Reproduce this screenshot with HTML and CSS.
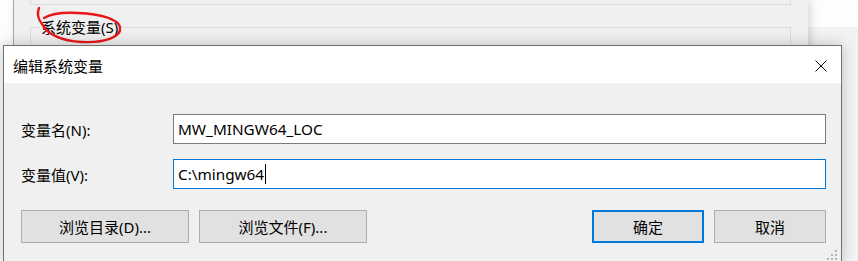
FILE: index.html
```html
<!DOCTYPE html>
<html lang="zh-CN">
<head>
    <meta charset="UTF-8">
    <meta name="viewport" content="width=device-width, initial-scale=1.0">
    <title>编辑系统变量</title>
    <link rel="stylesheet" href="styles.css">
</head>
<body>
    <div class="desktop">
        <div class="behind-right"></div>

        <!-- 后面的“环境变量”窗口 -->
        <div class="bg-window">
            <div class="group group-user"></div>
            <fieldset class="group group-system">
                <legend>系统变量(S)</legend>
            </fieldset>
        </div>

        <!-- 红色圈注 -->
        <svg class="ink" width="130" height="50" viewBox="0 0 130 50">
            <path d="M39 8 C37 13 38 19 42 24 C47 34 61 41 82 42 C105 43 122 37 120 27 C118 19 101 14 78 13 C62 12 51 14 44 18"
                  fill="none" stroke="#e8171a" stroke-width="2.4" stroke-linecap="round"/>
        </svg>

        <div class="dialog">
            <div class="titlebar">
                <span class="title">编辑系统变量</span>
                <span class="close">
                    <svg width="12" height="12" viewBox="0 0 12 12">
                        <path d="M0.5 0.5 L11.5 11.5 M11.5 0.5 L0.5 11.5" stroke="#111" stroke-width="1"/>
                    </svg>
                </span>
            </div>

            <div class="dialog-body">
                <div class="row">
                    <label class="label">变量名(N):</label>
                    <div class="field">MW_MINGW64_LOC</div>
                </div>
                <div class="row">
                    <label class="label">变量值(V):</label>
                    <div class="field focused">C:\mingw64<span class="caret"></span></div>
                </div>
                <div class="buttons">
                    <div class="btn-group">
                        <button class="btn wide">浏览目录(D)...</button>
                        <button class="btn wide">浏览文件(F)...</button>
                    </div>
                    <div class="btn-group">
                        <button class="btn default">确定</button>
                        <button class="btn">取消</button>
                    </div>
                </div>
            </div>

            <svg class="grip" width="11" height="11" viewBox="0 0 11 11">
                <rect x="9" y="1" width="2" height="2" fill="#b4b4b4"/>
                <rect x="5" y="5" width="2" height="2" fill="#b4b4b4"/>
                <rect x="9" y="5" width="2" height="2" fill="#b4b4b4"/>
                <rect x="1" y="9" width="2" height="2" fill="#b4b4b4"/>
                <rect x="5" y="9" width="2" height="2" fill="#b4b4b4"/>
                <rect x="9" y="9" width="2" height="2" fill="#b4b4b4"/>
            </svg>
        </div>
    </div>
</body>
</html>
```

FILE: styles.css
```css
* {
    margin: 0;
    padding: 0;
    box-sizing: border-box;
}

body {
    width: 858px;
    height: 261px;
    overflow: hidden;
    background: #fdfdfd;
    font-family: "Noto Sans", "Noto Sans CJK SC", sans-serif;
    font-size: 15px;
    color: #000;
}

.desktop {
    position: relative;
    width: 858px;
    height: 261px;
}

.behind-right {
    position: absolute;
    left: 807px;
    top: 27px;
    right: 0;
    bottom: 0;
    background: #f3f3f3;
}

/* window behind the dialog */
.bg-window {
    position: absolute;
    left: 13px;
    top: 0;
    width: 795px;
    height: 261px;
    background: #f0f0f0;
    border-left: 1px solid #a8a8a8;
    box-shadow: 3px 0 8px rgba(0, 0, 0, 0.14);
    padding-left: 16px;
}

.group {
    width: 761px;
    border: 1px solid #dcdcdc;
}

.group-user {
    height: 5px;
    border-top: none;
}

.group-system {
    margin-top: 14px;
    height: 60px;
    padding: 0 9px;
}

.group-system legend {
    padding: 0 1px;
    font-size: 15px;
    line-height: 16px;
}

.ink {
    position: absolute;
    left: 0;
    top: 0;
}

/* dialog */
.dialog {
    position: absolute;
    left: 3px;
    top: 45px;
    width: 839px;
    height: 218px;
    border: 1px solid #707070;
    background: #f0f0f0;
    box-shadow: 0 0 14px rgba(0, 0, 0, 0.22);
}

.titlebar {
    height: 37px;
    background: #fff;
    display: flex;
    align-items: center;
    justify-content: space-between;
    padding-left: 9px;
}

.title {
    font-size: 15px;
    padding-top: 2px;
}

.close {
    width: 40px;
    height: 37px;
    display: flex;
    align-items: center;
    justify-content: center;
    padding-top: 2px;
}

.dialog-body {
    padding: 31px 15px 0 17px;
    display: flex;
    flex-direction: column;
    gap: 15px;
}

.row {
    display: flex;
    align-items: center;
}

.label {
    width: 152px;
}

.field {
    flex: 1;
    height: 30px;
    border: 1px solid #7a7a7a;
    background: #fff;
    display: flex;
    align-items: center;
    padding-left: 4px;
    white-space: pre;
    font-size: 15.3px;
}

.field.focused {
    border-color: #0078d7;
}

.caret {
    display: inline-block;
    width: 1px;
    height: 20px;
    background: #000;
    margin-left: 1px;
}

.buttons {
    margin-top: 6px;
    display: flex;
    justify-content: space-between;
}

.btn-group {
    display: flex;
    gap: 10px;
}

.btn {
    width: 112px;
    height: 33px;
    background: #e1e1e1;
    border: 1px solid #adadad;
    font-family: inherit;
    font-size: 15px;
    color: #000;
}

.btn.wide {
    width: 168px;
}

.btn.default {
    border: 2px solid #0078d7;
}

.grip {
    position: absolute;
    left: 822px;
    top: 203px;
}
```
